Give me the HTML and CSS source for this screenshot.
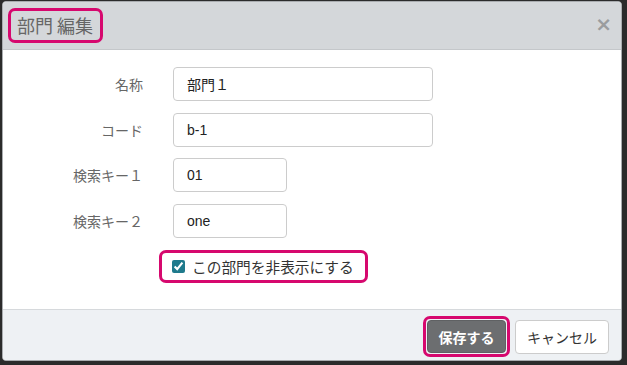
FILE: index.html
```html
<!DOCTYPE html>
<html lang="ja">
<head>
    <meta charset="UTF-8">
    <meta name="viewport" content="width=device-width, initial-scale=1.0">
    <title>部門 編集</title>
    <link rel="stylesheet" href="styles.css">
</head>
<body>
    <div class="modal">
        <div class="modal-header">
            <h4 class="modal-title mark">部門 編集</h4>
            <button class="close" aria-label="閉じる">&times;</button>
        </div>

        <div class="modal-body">
            <div class="form-row">
                <label class="form-label">名称</label>
                <input class="form-input wide" type="text" value="部門１">
            </div>
            <div class="form-row">
                <label class="form-label">コード</label>
                <input class="form-input wide" type="text" value="b-1">
            </div>
            <div class="form-row">
                <label class="form-label">検索キー１</label>
                <input class="form-input short" type="text" value="01">
            </div>
            <div class="form-row">
                <label class="form-label">検索キー２</label>
                <input class="form-input short" type="text" value="one">
            </div>
            <div class="check-row">
                <label class="check mark">
                    <input type="checkbox" checked>
                    <span>この部門を非表示にする</span>
                </label>
            </div>
        </div>

        <div class="modal-footer">
            <div class="mark btn-mark">
                <button class="btn btn-save">保存する</button>
            </div>
            <button class="btn btn-cancel">キャンセル</button>
        </div>
    </div>
</body>
</html>
```

FILE: styles.css
```css
html, body {
    margin: 0;
    height: 100%;
}
body {
    background-color: #2b2b2b; /* backdrop */
    font-family: "Liberation Sans", "Noto Sans CJK JP", sans-serif;
    font-size: 14px;
    color: #333;
    padding: 1px 5px 4px 2px;
    box-sizing: border-box;
}
.modal {
    height: 100%;
    display: flex;
    flex-direction: column;
    background: #fff;
    border: 1px solid #a9acaf;
    border-radius: 4px;
    overflow: hidden;
    box-sizing: border-box;
}

/* pink highlight boxes */
.mark {
    border: 3px solid #d6086e;
    border-radius: 7px;
}

.modal-header {
    height: 47px;
    flex-shrink: 0;
    display: flex;
    align-items: center;
    justify-content: space-between;
    padding: 0 9px 0 5px;
    background-color: #d4d7da;
    border-bottom: 1px solid #c4c7ca;
}
.modal-title {
    margin: 0 0 1px 0;
    padding: 3px 7px 3px 6px;
    font-family: "Noto Sans CJK JP", sans-serif;
    font-size: 18px;
    font-weight: normal;
    line-height: 23px;
    color: #666;
}
.close {
    border: none;
    background: none;
    padding: 0;
    margin-top: -3px;
    font-family: "DejaVu Sans", sans-serif;
    font-size: 20px;
    font-weight: bold;
    line-height: 1;
    color: #9a9c9e;
    cursor: pointer;
}

.modal-body {
    flex: 1;
    padding: 17px 0 0 0;
    display: flex;
    flex-direction: column;
    gap: 11.5px;
}
.form-row {
    display: flex;
    align-items: center;
}
.form-label {
    width: 140px;
    margin-right: 30px;
    text-align: right;
    font-family: "Noto Sans CJK JP", sans-serif;
    color: #666;
}
.form-input {
    height: 34px;
    box-sizing: border-box;
    padding: 0 13px;
    border: 1px solid #ccc;
    border-radius: 4px;
    font-family: "Liberation Sans", "Noto Sans CJK JP", sans-serif;
    font-size: 14px;
    color: #222;
}
.form-input.wide {
    width: 260px;
}
.form-input.short {
    width: 114px;
}

.check-row {
    display: flex;
    padding-left: 156px;
    margin-top: 1px;
}
.check {
    display: flex;
    align-items: center;
    gap: 7px;
    height: 27px;
    padding: 0 11px 0 10px;
    font-family: "Noto Sans CJK JP", sans-serif;
    font-size: 14.7px;
    color: #333;
}
.check input {
    margin: 0;
    width: 13px;
    height: 13px;
    accent-color: #1f7a8c;
}

.modal-footer {
    height: 51px;
    flex-shrink: 0;
    display: flex;
    align-items: center;
    justify-content: flex-end;
    gap: 5px;
    padding: 3px 12px 0 0;
    box-sizing: border-box;
    background-color: #eef1f4;
    border-top: 1px solid #d6d9dc;
}
.btn-mark {
    display: flex;
    padding: 1px;
    border-width: 3px;
}
.btn {
    height: 34px;
    box-sizing: border-box;
    border-radius: 4px;
    font-family: "Noto Sans CJK JP", sans-serif;
    font-size: 14px;
    cursor: pointer;
}
.btn-save {
    width: 79px;
    height: 33px;
    background-color: #6c6e70;
    border: 1px solid #5f6163;
    color: #fff;
    font-weight: bold;
}
.btn-cancel {
    width: 94px;
    background-color: #fff;
    border: 1px solid #ccc;
    color: #333;
}
```
